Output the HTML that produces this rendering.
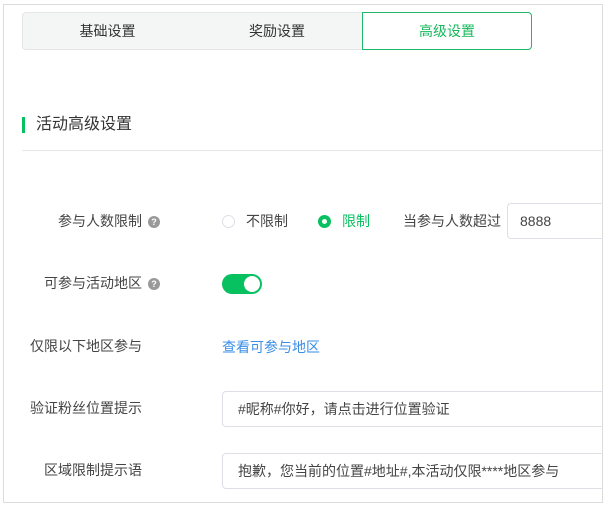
<!DOCTYPE html>
<html><head><meta charset="utf-8"><style>
*{box-sizing:border-box;margin:0;padding:0}
body{width:607px;height:509px;background:#fff;font-family:"Liberation Sans","Noto Sans CJK SC",sans-serif;font-size:14px;color:#333;position:relative;overflow:hidden}
.a{position:absolute}
.frame{left:3px;top:4px;width:600px;height:499px;border:1px solid #dcdcdc;overflow:hidden}
.tab{top:12px;height:38px;line-height:36px;text-align:center;font-size:14px;background:#f4f5f5;border:1px solid #e3e5e7}
.lbl{font-size:14px;color:#444;line-height:20px;white-space:nowrap}
.q{display:inline-block;width:12px;height:12px;border-radius:50%;background:#999;color:#fff;font-size:9px;line-height:12px;text-align:center;font-weight:bold;vertical-align:1px;margin-left:6px}
.inp{border:1px solid #dcdfe6;border-radius:4px;background:#fff;padding-left:15px;line-height:34px;color:#444;font-size:14px;white-space:nowrap}
</style></head><body>
<div class="a frame">
<div style="position:relative;left:-4px;top:-5px;width:607px;height:509px">
<div class="a tab" style="left:22px;width:171px;border-radius:4px 0 0 4px">基础设置</div>
<div class="a tab" style="left:192px;width:171px;border-left:none">奖励设置</div>
<div class="a tab" style="left:362px;width:170px;background:#fff;border-color:#1fb86a;color:#17b85c;border-radius:0 4px 4px 0">高级设置</div>
<div class="a" style="left:22px;top:117px;width:3px;height:16px;background:#07c160"></div>
<div class="a" style="left:36px;top:114px;font-size:16px;color:#333;line-height:22px">活动高级设置</div>
<div class="a" style="left:22px;top:150px;width:590px;height:1px;background:#e6e6e6"></div>

<div class="a lbl" style="left:58px;top:211px">参与人数限制<span class="q">?</span></div>
<div class="a" style="left:222px;top:215px;width:13px;height:13px;border:1px solid #dcdfe6;border-radius:50%"></div>
<div class="a lbl" style="left:246px;top:211px">不限制</div>
<div class="a" style="left:318px;top:215px;width:13px;height:13px;border-radius:50%;background:#07c160"><div style="position:absolute;left:4px;top:4px;width:5px;height:5px;border-radius:50%;background:#fff"></div></div>
<div class="a lbl" style="left:342px;top:211px;color:#07c160">限制</div>
<div class="a lbl" style="left:403px;top:211px">当参与人数超过</div>
<div class="a inp" style="left:507px;top:203px;width:120px;height:36px;padding-left:12px">8888</div>

<div class="a lbl" style="left:44px;top:273px">可参与活动地区<span class="q">?</span></div>
<div class="a" style="left:222px;top:274px;width:40px;height:20px;border-radius:10px;background:#07c160"><div style="position:absolute;right:2px;top:2px;width:16px;height:16px;border-radius:50%;background:#fff"></div></div>

<div class="a lbl" style="left:30px;top:336px">仅限以下地区参与</div>
<div class="a lbl" style="left:222px;top:337px;color:#3a8ee6">查看可参与地区</div>

<div class="a lbl" style="left:30px;top:398px">验证粉丝位置提示</div>
<div class="a inp" style="left:222px;top:391px;width:400px;height:36px">#昵称#你好，请点击进行位置验证</div>

<div class="a lbl" style="left:44px;top:460px">区域限制提示语</div>
<div class="a inp" style="left:222px;top:453px;width:400px;height:36px">抱歉，您当前的位置#地址#,本活动仅限****地区参与</div>
</div>
</div>
</body></html>
